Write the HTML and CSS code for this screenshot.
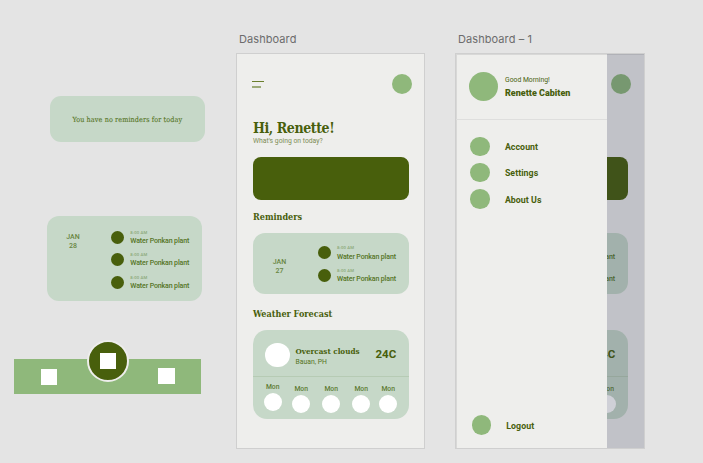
FILE: index.html
```html
<!DOCTYPE html>
<html lang="en">
<head>
<meta charset="utf-8">
<title>Dashboard</title>
<link rel="stylesheet" href="styles.css">
</head>
<body>
<main class="canvas">
  <section class="node empty-card"><p class="serif empty-text">You have no reminders for today</p></section>

  <section class="node reminder-card tall">
    <div class="date">JAN<br>28</div>
    <ul class="tasks">
      <li><i class="dot"></i><div><time>8:00 AM</time><p>Water Ponkan plant</p></div></li>
      <li><i class="dot"></i><div><time>8:00 AM</time><p>Water Ponkan plant</p></div></li>
      <li><i class="dot"></i><div><time>8:00 AM</time><p>Water Ponkan plant</p></div></li>
    </ul>
  </section>

  <nav class="node tabbar">
    <i class="square"></i>
    <span class="fab"><i class="square"></i></span>
    <i class="square last"></i>
  </nav>

  <h2 class="node label label-one">Dashboard</h2>
  <article class="node artboard one">
    <div class="screen">
      <header class="topbar"><span class="menu"><i></i><i></i></span><i class="avatar"></i></header>
      <h1 class="serif greeting">Hi, Renette!</h1>
      <p class="question">What's going on today?</p>
      <div class="banner"></div>
      <h3 class="serif heading reminders">Reminders</h3>
      <section class="reminder-card">
        <div class="date">JAN<br>27</div>
        <ul class="tasks">
          <li><i class="dot"></i><div><time>8:00 AM</time><p>Water Ponkan plant</p></div></li>
          <li><i class="dot"></i><div><time>8:00 AM</time><p>Water Ponkan plant</p></div></li>
        </ul>
      </section>
      <h3 class="serif heading forecast">Weather Forecast</h3>
      <section class="weather">
        <div class="now"><i class="sky"></i><div class="place"><b class="serif">Overcast clouds</b><span>Bauan, PH</span></div><strong>24C</strong></div>
        <div class="days"><span>Mon<i></i></span><span>Mon<i></i></span><span>Mon<i></i></span><span>Mon<i></i></span><span>Mon<i></i></span></div>
      </section>
    </div>
  </article>

  <h2 class="node label label-two">Dashboard – 1</h2>
  <article class="node artboard two">
    <div class="screen">
      <header class="topbar"><span class="menu"><i></i><i></i></span><i class="avatar"></i></header>
      <h1 class="serif greeting">Hi, Renette!</h1>
      <p class="question">What's going on today?</p>
      <div class="banner"></div>
      <h3 class="serif heading reminders">Reminders</h3>
      <section class="reminder-card">
        <div class="date">JAN<br>27</div>
        <ul class="tasks">
          <li><i class="dot"></i><div><time>8:00 AM</time><p>Water Ponkan plant</p></div></li>
          <li><i class="dot"></i><div><time>8:00 AM</time><p>Water Ponkan plant</p></div></li>
        </ul>
      </section>
      <h3 class="serif heading forecast">Weather Forecast</h3>
      <section class="weather">
        <div class="now"><i class="sky"></i><div class="place"><b class="serif">Overcast clouds</b><span>Bauan, PH</span></div><strong>24C</strong></div>
        <div class="days"><span>Mon<i></i></span><span>Mon<i></i></span><span>Mon<i></i></span><span>Mon<i></i></span><span>Mon<i></i></span></div>
      </section>
    </div>
    <div class="scrim"></div>
    <aside class="drawer">
      <header class="profile"><i></i><div><span>Good Morning!</span><b>Renette Cabiten</b></div></header>
      <ul class="links">
        <li><i></i><span>Account</span></li>
        <li><i></i><span>Settings</span></li>
        <li><i></i><span>About Us</span></li>
      </ul>
      <div class="logout"><i></i><span>Logout</span></div>
    </aside>
  </article>
</main>
</body>
</html>
```
FILE: styles.css
```css
:root {
  --dark: #485f0c;
  --green: #8fb87b;
  --mint: #c6d8c8;
  --paper: #eeeeec;
}
* { box-sizing: border-box; margin: 0; padding: 0; }
body { background: #e4e4e4; font-family: Roboto, sans-serif; color: var(--dark); }
i { display: block; flex: none; }
ul { list-style: none; }
.canvas { position: relative; width: 703px; height: 463px; overflow: hidden; }
.node { position: absolute; }
.serif { font-family: "DejaVu Serif Condensed", "DejaVu Serif", serif; font-stretch: condensed; white-space: nowrap; }

.empty-card { left: 49.7px; top: 96px; width: 155.3px; height: 45.8px; border-radius: 11px; background: var(--mint); display: flex; align-items: center; justify-content: center; }
.empty-text { font-size: 7.2px; line-height: 10px; letter-spacing: 0.1px; color: #557424; -webkit-text-stroke: 0.1px #557424; padding-top: 2.5px; }

.reminder-card { height: 61.5px; border-radius: 12px; background: var(--mint); display: flex; padding-top: 13.8px; }
.date { width: 53px; padding-top: 11.5px; text-align: center; font-size: 7px; font-weight: 500; line-height: 9px; color: #66853f; letter-spacing: 0.1px; }
.tasks { margin-left: 12px; display: flex; flex-direction: column; gap: 9.4px; }
.tasks li { display: flex; gap: 6px; height: 13px; align-items: center; }
.dot { width: 13px; height: 13px; border-radius: 50%; background: var(--dark); }
.tasks time { display: block; font-size: 4.3px; font-weight: 500; line-height: 5px; color: #8ba878; letter-spacing: 0.15px; }
.tasks p { margin: 2.2px 0 -1.2px; font-size: 7px; font-weight: 500; line-height: 9px; letter-spacing: -0.13px; color: #557424; white-space: nowrap; }
.tall { left: 46.5px; top: 216.2px; width: 155.5px; height: 85px; padding-top: 14.7px; }
.tall .date { padding-top: 2.3px; }
.tall .tasks { margin-left: 11.8px; }

.tabbar { left: 13.5px; top: 358.5px; width: 187.5px; height: 35px; background: var(--green); display: flex; padding: 10.5px 26.5px 0 27.5px; justify-content: space-between; align-items: flex-start; }
.square { width: 16.3px; height: 16.3px; background: #fff; }
.last { margin-top: -1px; }
.fab { width: 42px; height: 42px; margin: -29px 0 0 0; border: 2px solid var(--paper); border-radius: 50%; background: var(--dark); display: flex; align-items: center; justify-content: center; }

.label { top: 32px; font-family: Inter, sans-serif; font-size: 11px; font-weight: 400; line-height: 14px; letter-spacing: 0.08px; color: #6c6c6c; white-space: nowrap; }
.label-one { left: 239px; }
.label-two { left: 458px; }
.artboard { top: 53px; height: 396px; background: var(--paper); border: 1px solid #cfcfcf; overflow: hidden; }
.one { left: 236px; width: 189px; }
.two { left: 455px; width: 189.5px; box-shadow: inset 1px 1px #d8d8d7; }
.screen { width: 188px; padding: 20px 0 0 16px; }
.topbar { width: 160px; height: 20px; margin-left: -1px; display: flex; justify-content: space-between; }
.menu { padding-top: 7px; }
.menu i { width: 12px; height: 1px; background: #6a7e2c; margin-bottom: 4px; }
.menu i + i { width: 9px; height: 2px; background: #9caa78; }
.avatar { width: 20px; height: 20px; border-radius: 50%; background: var(--green); }
.greeting { margin-top: 24px; font-size: 14px; line-height: 20px; letter-spacing: -0.42px; }
.question { margin-top: -1.5px; font-size: 6.8px; line-height: 8px; color: #7d8d55; white-space: nowrap; }
.banner { width: 156px; height: 43.4px; margin-top: 12.3px; border-radius: 8px; background: var(--dark); }
.heading { font-size: 9px; line-height: 12px; }
.reminders { margin-top: 10.5px; }
.screen .reminder-card { width: 156px; margin-top: 10px; }
.forecast { margin-top: 13.8px; }
.weather { width: 156px; height: 89px; margin-top: 10.2px; border-radius: 14px; background: var(--mint); }
.now { height: 46.4px; border-bottom: 1.2px solid #b6cbb4; padding: 12.7px 12px 0; display: flex; }
.sky { width: 24.5px; height: 24.5px; border-radius: 50%; background: #fff; }
.place { width: 80px; margin-left: 6px; padding-top: 3.4px; }
.place b { display: block; font-size: 8px; line-height: 11px; }
.place span { display: block; margin-top: 1.2px; font-size: 6.8px; line-height: 9px; color: #557424; }
.now strong { font-size: 11.5px; line-height: 14px; padding-top: 4.5px; }
.days { display: flex; padding: 6.6px 0 0 10.7px; }
.days span { width: 18px; margin: 1.5px 12px 0 0; text-align: center; font-size: 6.8px; font-weight: 500; line-height: 9px; color: #5f7d34; }
.days span:first-child { margin: 0 10.5px 0 0; }
.days span:nth-child(4) { margin-right: 9px; }
.days i { width: 18px; height: 18px; margin-top: 1px; border-radius: 50%; background: #fff; }

/* headings fully covered by the open drawer */
.two .greeting, .two .question, .two .heading, .two .date { visibility: hidden; }

.scrim { position: absolute; inset: 0; background: rgba(38, 42, 72, 0.22); }
.drawer { position: absolute; left: 0; top: 0; bottom: 0; width: 151px; background: var(--paper); font-size: 8.8px; font-weight: 700; box-shadow: inset 1px 1px #d8d8d7; }
.drawer i { border-radius: 50%; background: var(--green); }
.profile { height: 65.5px; border-bottom: 1.5px solid #dededd; display: flex; padding: 18px 0 0 13px; }
.profile i { width: 29px; height: 29px; }
.profile div { margin-left: 7px; padding-top: 3px; white-space: nowrap; }
.profile span { display: block; font-size: 6.8px; line-height: 11px; font-weight: 400; }
.profile b { display: block; font-size: 9px; line-height: 14px; }
.links { padding: 17px 0 0 14.3px; display: grid; gap: 6.8px; }
.links li, .logout { display: flex; align-items: center; gap: 15px; height: 19.6px; }
.links span, .logout span { padding-top: 1.6px; letter-spacing: 0.05px; }
.links i, .logout i { width: 19.6px; height: 19.6px; }
.logout { position: absolute; left: 15.7px; bottom: 13px; }
```
